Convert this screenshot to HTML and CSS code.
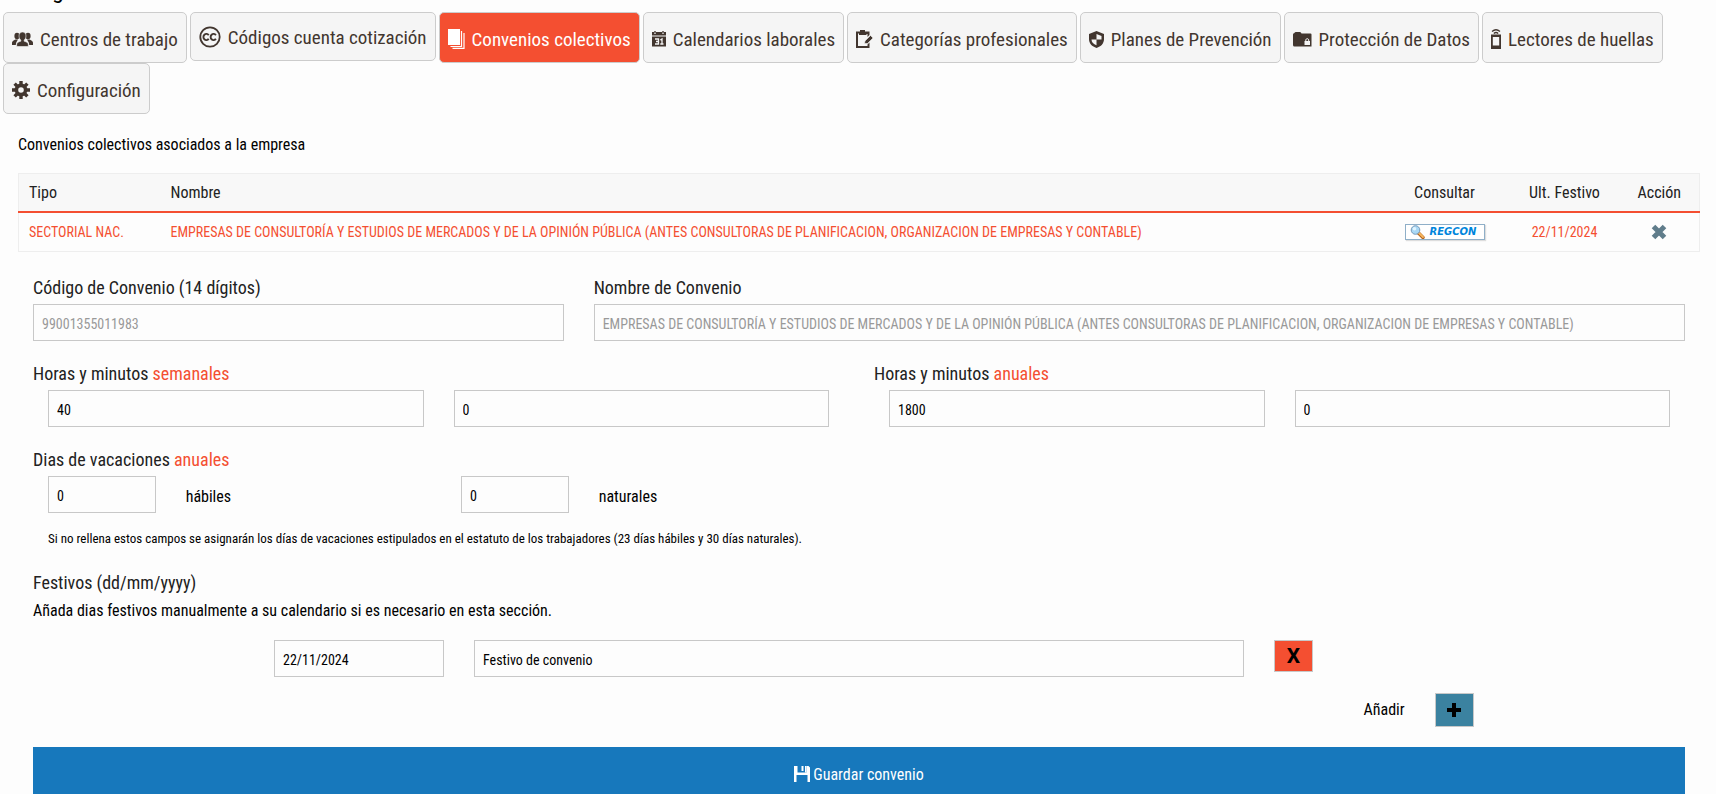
FILE: index.html
```html
<!DOCTYPE html>
<html lang="es">
<head>
  <meta charset="UTF-8">
  <meta name="viewport" content="width=device-width, initial-scale=1.0">
  <title>Convenios colectivos</title>
  <link rel="stylesheet" href="styles.css">
</head>
<body>

<header class="page-title">
  <h1>Configuración</h1>
</header>

<nav class="tabs">
  <button type="button" class="tab">
    <svg width="21" height="15" viewBox="0 0 21 15" fill="currentColor">
      <ellipse cx="5" cy="4" rx="2.6" ry="3.2"/><ellipse cx="16" cy="4" rx="2.6" ry="3.2"/>
      <path d="M0 13V10.500Q0 8.800 3.300 7.500H6L4.800 9.500Q3.800 10.500 3.800 13ZM21 13V10.500Q21 8.800 17.700 7.500H15L16.200 9.500Q17.200 10.500 17.200 13Z"/>
      <path d="M10.500 0C8.300 0 7 1.500 7 4C7 5.800 7.800 7.300 8.800 8V9.200C6.200 10 4.700 10.700 4.700 12.200V14.500H16.300V12.200C16.300 10.700 14.800 10 12.200 9.200V8C13.200 7.300 14 5.800 14 4C14 1.500 12.700 0 10.500 0Z" stroke="#f5f5f5" stroke-width=".6"/>
    </svg>
    <span>Centros de trabajo</span>
  </button>
  <button type="button" class="tab tab-short">
    <svg width="22" height="22" viewBox="0 0 22 22" fill="none" stroke="currentColor">
      <circle cx="11" cy="11" r="9.700" stroke-width="1.800"/>
      <path d="M9.700 9.200A2.900 3.100 0 1 0 9.700 12.800M16.900 9.200A2.900 3.100 0 1 0 16.900 12.800" stroke-width="1.900"/>
    </svg>
    <span>Códigos cuenta cotización</span>
  </button>
  <button type="button" class="tab active">
    <svg width="17" height="20" viewBox="0 0 17 20">
      <path d="M0 0H12V16H0Z" fill="#fff"/>
      <path d="M13.500 2V17.500H2.500M16 4V19.300H4.500" fill="none" stroke="#fff" stroke-width="1.200"/>
    </svg>
    <span>Convenios colectivos</span>
  </button>
  <button type="button" class="tab">
    <svg width="14" height="16" viewBox="0 0 14 16" fill="currentColor">
      <path d="M0 1H2V3H4V1H10V3H12V1H14V4.500H0ZM0 5.500H14V15.500H0Z"/>
      <path d="M2.300 0H3.700V2.500H2.300ZM10.300 0H11.700V2.500H10.300Z"/>
      <path d="M3 8H6.500V13H3M4 10.500H6.500M8.300 9L10 8V13M8.300 13H11.500" fill="none" stroke="#f5f5f5" stroke-width="1.300"/>
    </svg>
    <span>Calendarios laborales</span>
  </button>
  <button type="button" class="tab">
    <svg width="17" height="18" viewBox="0 0 17 18" fill="currentColor">
      <path d="M0 1.500H4V0H9V1.500H13.500V5L11.500 7V4H10.500V5H3V3.500H2V16H11.500V14.500L13.500 12.500V18H0Z"/>
      <path d="M8.500 13.500L9 11L14.500 5.500L17 8L11.500 13.500Z" stroke="#f5f5f5" stroke-width=".6"/>
    </svg>
    <span>Categorías profesionales</span>
  </button>
  <button type="button" class="tab">
    <svg width="15" height="17" viewBox="0 0 15 17">
      <path d="M7.500 0L15 3V8C15 12.500 12 15.500 7.500 17C3 15.500 0 12.500 0 8V3Z" fill="currentColor"/>
      <path d="M7.500 3L12.500 5V8.500H7.500ZM7.500 8.500V14.300C4.500 13 2.500 11.300 2.500 8.500Z" fill="#f5f5f5"/>
    </svg>
    <span>Planes de Prevención</span>
  </button>
  <button type="button" class="tab">
    <svg width="19" height="15" viewBox="0 0 19 15">
      <path d="M1.500 1Q1.500 0 3 0H7Q8 0 8.500 1.500H17.500Q18.500 1.500 18.500 2.500V14.500H1.500Q0 14.500 0 13V2.500Q0 1 1.500 1Z" fill="currentColor"/>
      <path d="M11.500 9H17V13H11.500Z" fill="#f5f5f5"/>
      <path d="M12.800 9V7.800A1.500 1.500 0 0 1 15.700 7.800V9" fill="none" stroke="#f5f5f5"/>
    </svg>
    <span>Protección de Datos</span>
  </button>
  <button type="button" class="tab">
    <svg width="10" height="20" viewBox="0 0 10 20" fill="none" stroke="currentColor">
      <path d="M1 2.600Q5 -1 9 2.600M2.800 4.500Q5 2.600 7.200 4.500" stroke-width="1.300"/>
      <path d="M0 5.500H10V20H0Z M1.800 8V16.500H8.200V8Z" fill="currentColor" fill-rule="evenodd" stroke="none"/>
    </svg>
    <span>Lectores de huellas</span>
  </button>
  <button type="button" class="tab">
    <svg width="18" height="18" viewBox="0 0 18 18" fill="none" stroke="currentColor">
      <circle cx="9" cy="9" r="4.600" stroke-width="3.600"/>
      <path d="M9 0V3.500M9 14.500V18M0 9H3.500M14.500 9H18M2.600 2.600L5 5M13 13L15.400 15.400M2.600 15.400L5 13M13 5L15.400 2.600" stroke-width="3.400"/>
    </svg>
    <span>Configuración</span>
  </button>
</nav>

<main class="content">
  <h2 class="section-title">Convenios colectivos asociados a la empresa</h2>

  <table class="agreements">
    <thead>
      <tr>
        <th class="col-type">Tipo</th>
        <th>Nombre</th>
        <th class="col-check">Consultar</th>
        <th class="col-date">Ult. Festivo</th>
        <th class="col-action">Acción</th>
      </tr>
    </thead>
    <tbody>
      <tr>
        <td>SECTORIAL NAC.</td>
        <td>EMPRESAS DE CONSULTORÍA Y ESTUDIOS DE MERCADOS Y DE LA OPINIÓN PÚBLICA (ANTES CONSULTORAS DE PLANIFICACION, ORGANIZACION DE EMPRESAS Y CONTABLE)</td>
        <td class="col-check">
          <a href="#" class="regcon">
            <svg width="15" height="14" viewBox="0 0 15 14">
              <path d="M8.500 8L13 12.500" stroke="#b5651d" stroke-width="3.400" stroke-linecap="round"/>
              <path d="M9 8L13 12" stroke="#f8b860" stroke-width="1.800" stroke-linecap="round"/>
              <circle cx="5.500" cy="5" r="4.300" fill="#a9d8f5" stroke="#7799b8"/>
              <circle cx="4.500" cy="3.800" r="1.800" fill="#e2f5ff"/>
            </svg>
            <span>REGCON</span>
          </a>
        </td>
        <td class="col-date">22/11/2024</td>
        <td class="col-action">
          <button type="button" class="row-delete" aria-label="Eliminar">
            <svg width="16" height="16" viewBox="0 0 16 16"><path d="M2.500 2.500L13.500 13.500M13.500 2.500L2.500 13.500" stroke="#607d8b" stroke-width="5"/></svg>
          </button>
        </td>
      </tr>
    </tbody>
  </table>

  <form class="agreement-form">
    <div class="grid">
      <div class="span-4">
        <label class="field-title" for="codigo">Código de Convenio (14 dígitos)</label>
        <input type="text" id="codigo" value="99001355011983" disabled>
      </div>
      <div class="span-8">
        <label class="field-title" for="nombre">Nombre de Convenio</label>
        <input type="text" id="nombre" value="EMPRESAS DE CONSULTORÍA Y ESTUDIOS DE MERCADOS Y DE LA OPINIÓN PÚBLICA (ANTES CONSULTORAS DE PLANIFICACION, ORGANIZACION DE EMPRESAS Y CONTABLE)" disabled>
      </div>
    </div>

    <div class="grid">
      <div class="span-6">
        <label class="field-title" for="horas-sem">Horas y minutos <span class="accent">semanales</span></label>
        <div class="pair">
          <input type="text" id="horas-sem" value="40">
          <input type="text" aria-label="Minutos semanales" value="0">
        </div>
      </div>
      <div class="span-6">
        <label class="field-title" for="horas-anu">Horas y minutos <span class="accent">anuales</span></label>
        <div class="pair">
          <input type="text" id="horas-anu" value="1800">
          <input type="text" aria-label="Minutos anuales" value="0">
        </div>
      </div>
    </div>

    <div class="holidays">
      <h3 class="field-title">Dias de vacaciones <span class="accent">anuales</span></h3>
      <div class="grid holidays-row">
        <input type="text" id="habiles" value="0">
        <label for="habiles" class="span-2">hábiles</label>
        <input type="text" id="naturales" value="0">
        <label for="naturales" class="span-2">naturales</label>
      </div>
      <p class="note">Si no rellena estos campos se asignarán los días de vacaciones estipulados en el estatuto de los trabajadores (23 días hábiles y 30 días naturales).</p>
    </div>

    <div class="festivos">
      <h3 class="field-title">Festivos (dd/mm/yyyy)</h3>
      <p>Añada dias festivos manualmente a su calendario si es necesario en esta sección.</p>
      <div class="grid festivo-row">
        <input type="text" class="span-2" aria-label="Fecha" value="22/11/2024">
        <input type="text" class="span-8" aria-label="Descripción" value="Festivo de convenio">
        <button type="button" class="btn-square btn-remove">X</button>
      </div>
      <div class="grid add-row">
        <label for="add-festivo" class="span-10">Añadir</label>
        <button type="button" id="add-festivo" class="btn-square btn-add">
          <svg width="14" height="14" viewBox="0 0 14 14"><path d="M7 0V14M0 7H14" stroke="#000" stroke-width="4"/></svg>
        </button>
      </div>
    </div>

    <button type="submit" class="btn-save">
      <svg width="16" height="16" viewBox="0 0 16 16" fill="#fff">
        <path d="M0 0H3.500V6.500H12.500V0H14.500L16 1.500V16H13.500V9H2.500V16H0Z"/>
        <path d="M7.500 0H9.500V5H7.500ZM11 0H12.500V6.500H11Z"/>
      </svg>
      <span>Guardar convenio</span>
    </button>
  </form>
</main>

</body>
</html>
```
FILE: styles.css
```css
* {
  box-sizing: border-box;
}

body {
  margin: 0;
  background-color: #fdfdfd;
  color: #000;
  font-family: "Roboto Condensed", "Liberation Sans Narrow", Roboto, sans-serif;
  font-size: 16px;
  line-height: 24px;
}

button,
input {
  font-family: inherit;
}

h1,
h2,
h3,
p {
  margin: 0;
  font-weight: 400;
}

/* only the foot of the title stays in view above the tabs */
.page-title {
  display: flex;
  align-items: flex-end;
  height: 12px;
  padding: 0 3px 12px;
  overflow: hidden;
}

.page-title h1 {
  font-size: 24px;
  line-height: 20px;
}

/* Tabs */
.tabs {
  display: flex;
  flex-wrap: wrap;
  align-items: flex-start;
  column-gap: 3px;
  padding: 0 3px;
}

.tab {
  display: flex;
  align-items: center;
  gap: 7px;
  padding: 15px 8px 10px;
  border: 1px solid #ccc;
  border-radius: 5px;
  background-color: #f5f5f5;
  color: #42362f;
  font-size: 19px;
  line-height: 24px;
}

.tab svg {
  flex: none;
  margin-bottom: 2px;
}

.tab-short {
  padding-top: 13px;
}

.tab.active {
  background-color: #f44f31;
  color: #fff;
}

.content {
  padding: 19px 16px 0 18px;
}

.section-title {
  font-size: 16px;
}

/* Table */
.agreements {
  width: 100%;
  margin-top: 16px;
  border: 1px solid #eee;
  border-collapse: collapse;
  table-layout: fixed;
}

.agreements th {
  height: 38px;
  padding: 1px 10px 0;
  border-bottom: 2px solid #f44f31;
  background-color: #f8f8f8;
  color: #222;
  font-weight: 400;
  text-align: left;
}

.agreements td {
  height: 40px;
  padding: 0 10px;
  color: #f44f31;
  font-size: 14px;
}

.agreements .col-type {
  width: 142px;
}

.agreements .col-check {
  width: 130px;
  text-align: center;
}

.agreements .col-date {
  width: 110px;
  text-align: center;
}

.agreements .col-action {
  width: 80px;
  text-align: center;
}

.regcon {
  display: flex;
  align-items: center;
  gap: 5px;
  width: 80px;
  height: 16px;
  margin: 0 auto;
  padding-left: 4px;
  border: 1px solid #8fafc8;
  background-color: #fff;
  box-shadow: 1px 1px 1px #ddd;
  color: #0085dc;
  font: italic bold 10px/14px "DejaVu Sans", sans-serif;
  text-decoration: none;
}

.row-delete {
  display: block;
  margin: 0 auto;
  padding: 0;
  border: 0;
  background: none;
  line-height: 0;
}

/* Form */
.agreement-form {
  padding: 24px 15px 0;
}

.grid {
  display: grid;
  grid-template-columns: repeat(12, minmax(0, 1fr));
  column-gap: 30px;
}

.span-2 {
  grid-column: span 2;
}

.span-4 {
  grid-column: span 4;
}

.span-6 {
  grid-column: span 6;
}

.span-8 {
  grid-column: span 8;
}

.span-10 {
  grid-column: span 10;
}

.field-title {
  display: block;
  padding-bottom: 4px;
  color: #222;
  font-size: 18px;
  line-height: 24px;
}

.accent {
  color: #f44f31;
}

input[type="text"] {
  display: block;
  width: 100%;
  height: 37px;
  padding: 2px 8px 0;
  border: 1px solid #c8c8c8;
  border-radius: 0;
  background-color: #fdfdfd;
  color: #000;
  font-size: 14px;
}

input[type="text"]:disabled {
  color: #999;
}

.agreement-form > .grid {
  margin-bottom: 21px;
}

.pair {
  display: grid;
  grid-template-columns: 1fr 1fr;
  column-gap: 30px;
  padding: 0 15px;
}

.holidays-row {
  align-items: center;
  padding: 0 15px;
}

.holidays-row label {
  padding-top: 4px;
}

.note {
  padding: 14px 15px 0;
  font-size: 13px;
}

.festivos {
  padding-top: 20px;
}

.festivo-row {
  max-width: 1170px;
  margin: 17px auto 16px;
}

.btn-square {
  display: flex;
  align-items: center;
  justify-content: center;
  width: 39px;
  height: 32px;
  padding: 0;
  border: 1px solid #c8c8c8;
  color: #000;
  font-family: Roboto, sans-serif;
  font-size: 21px;
  font-weight: 700;
}

.btn-remove {
  background-color: #f44f31;
}

.btn-add {
  height: 34px;
  background-color: #3b82a0;
}

.add-row {
  align-items: center;
}

.add-row label {
  text-align: right;
}

.btn-save {
  display: flex;
  align-items: center;
  justify-content: center;
  gap: 3px;
  width: 100%;
  height: 54px;
  margin-top: 20px;
  padding: 0;
  border: 0;
  background-color: #1778bc;
  color: #fff;
  font-size: 16px;
}
```
